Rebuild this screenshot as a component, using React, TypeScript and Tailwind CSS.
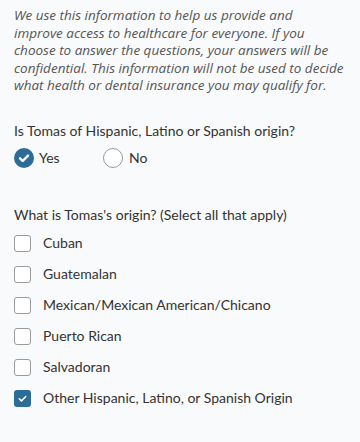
import { useState } from "react";

const origins = [
  "Cuban",
  "Guatemalan",
  "Mexican/Mexican American/Chicano",
  "Puerto Rican",
  "Salvadoran",
  "Other Hispanic, Latino, or Spanish Origin",
];

const introLines = [
  "We use this information to help us provide and",
  "improve access to healthcare for everyone. If you",
  "choose to answer the questions, your answers will be",
  "confidential. This information will not be used to decide",
  "what health or dental insurance you may qualify for.",
];

function CheckIcon({ className }: { className?: string }) {
  return (
    <svg className={className} viewBox="0 0 16 16" fill="none" stroke="currentColor" strokeLinecap="round" strokeLinejoin="round">
      <path d="M4 8.3l2.7 2.7L12 5.6" />
    </svg>
  );
}

export default function App() {
  const [hispanic, setHispanic] = useState<"yes" | "no">("yes");
  const [selected, setSelected] = useState<string[]>(["Other Hispanic, Latino, or Spanish Origin"]);

  function toggle(origin: string) {
    setSelected((current) =>
      current.includes(origin) ? current.filter((item) => item !== origin) : [...current, origin],
    );
  }

  return (
    <div className="min-h-[442px] w-[360px] bg-[#f9fafb] px-[14px] pt-[7px] text-[#333] [font-family:Lato,'Open_Sans',sans-serif]">
      <p className="whitespace-nowrap text-[13.5px] italic leading-[17.5px] text-[#555] [font-family:'Open_Sans',sans-serif]">
        {introLines.map((line, index) => (
          <span key={line}>
            {line}
            {index < introLines.length - 1 ? <br /> : null}
          </span>
        ))}
      </p>

      <p className="mt-[27px] text-[14px] leading-[18px]">Is Tomas of Hispanic, Latino or Spanish origin?</p>

      <div className="mt-[8px] flex items-center">
        <button className="flex w-[89px] items-center gap-[5px] text-left" onClick={() => setHispanic("yes")} type="button">
          {hispanic === "yes" ? (
            <span className="flex h-[20px] w-[20px] items-center justify-center rounded-full bg-[#2c6c99] text-white">
              <CheckIcon className="h-[16px] w-[16px] stroke-[2.4]" />
            </span>
          ) : (
            <span className="h-[20px] w-[20px] rounded-full border border-[#9a9a9a] bg-white" />
          )}
          <span className="text-[14px] leading-[20px]">Yes</span>
        </button>
        <button className="flex items-center gap-[6px] text-left" onClick={() => setHispanic("no")} type="button">
          {hispanic === "no" ? (
            <span className="flex h-[20px] w-[20px] items-center justify-center rounded-full bg-[#2c6c99] text-white">
              <CheckIcon className="h-[16px] w-[16px] stroke-[2.4]" />
            </span>
          ) : (
            <span className="h-[20px] w-[20px] rounded-full border border-[#9a9a9a] bg-white" />
          )}
          <span className="text-[14px] leading-[20px]">No</span>
        </button>
      </div>

      <p className="mt-[38px] text-[14px] leading-[18px]">What is Tomas's origin? (Select all that apply)</p>

      <div className="mt-[4px] flex flex-col">
        {origins.map((origin) => {
          const checked = selected.includes(origin);
          return (
            <button
              key={origin}
              className="flex h-[31px] items-center gap-[12px] text-left"
              onClick={() => toggle(origin)}
              type="button"
            >
              {checked ? (
                <span className="flex h-[17px] w-[17px] items-center justify-center rounded-[3px] bg-[#2c6c99] text-white">
                  <CheckIcon className="h-[13px] w-[13px] stroke-[2]" />
                </span>
              ) : (
                <span className="h-[17px] w-[17px] rounded-[3px] border border-[#9a9a9a] bg-white" />
              )}
              <span className="text-[14px] leading-[18px]">{origin}</span>
            </button>
          );
        })}
      </div>
    </div>
  );
}
